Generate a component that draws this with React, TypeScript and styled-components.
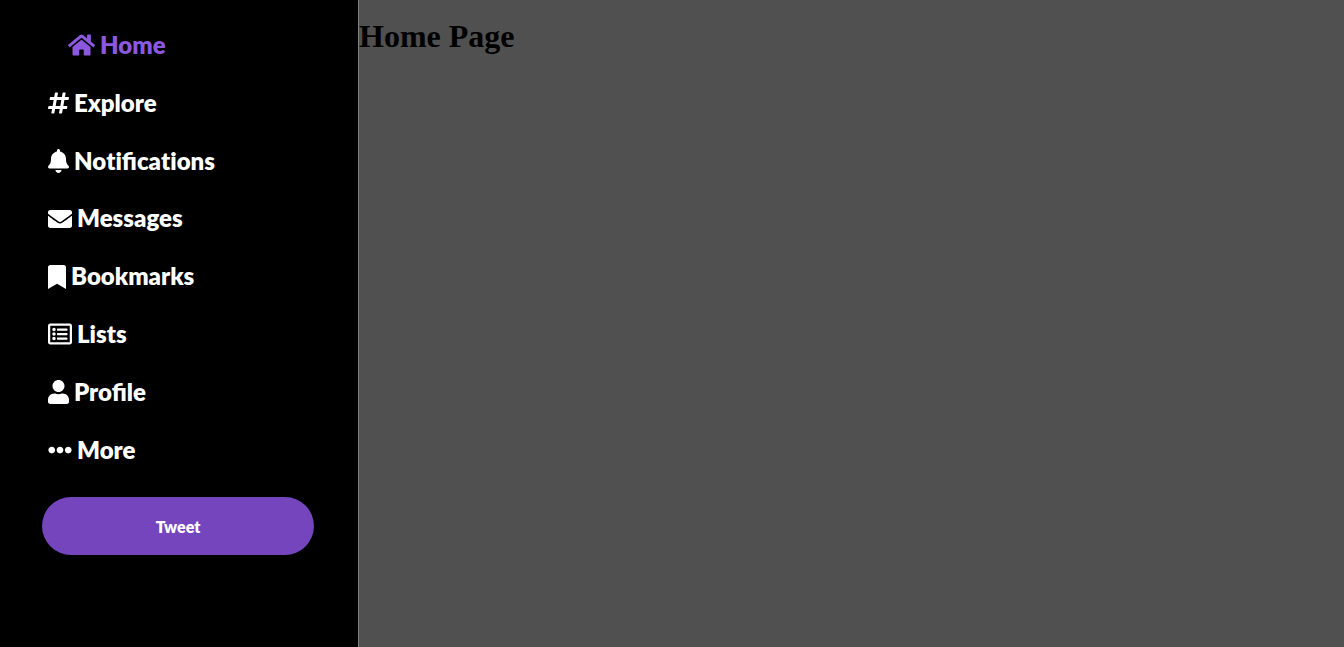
import React from 'react';
import styled, { createGlobalStyle } from 'styled-components';
import { FaHome, FaHashtag, FaBell, FaEnvelope, FaBookmark, FaRegListAlt, FaUser, FaEllipsisH } from 'react-icons/fa';

const GlobalStyle = createGlobalStyle`
  body {
    margin: 0;
    background: #505050;
    font-family: "Liberation Serif", serif;
  }
`;

const Page = styled.div`
  display: flex;
  min-height: 100vh;
`;

const Sidebar = styled.nav`
  box-sizing: border-box;
  flex: 0 0 359px;
  padding: 31px 44px 30px 42px;
  background: #000;
  border-right: 1px solid #808080;
  font-family: Lato, sans-serif;
`;

const List = styled.ul`
  display: flex;
  flex-direction: column;
  gap: 29px;
  margin: 0 0 33px;
  padding: 0 0 0 6px;
  list-style: none;
`;

const NavLink = styled.a<{ $active?: boolean }>`
  display: flex;
  align-items: center;
  gap: 5px;
  padding-left: ${({ $active }) => ($active ? '20px' : '0')};
  color: ${({ $active }) => ($active ? '#8b58df' : '#fff')};
  font-size: 24px;
  font-weight: 800;
  line-height: 1.2;
  text-decoration: none;
`;

const TweetButton = styled.button`
  width: 100%;
  height: 58px;
  border: 0;
  border-radius: 29px;
  background: #7545be;
  color: #fff;
  font: 800 16px Lato, sans-serif;
  cursor: pointer;
`;

const Content = styled.main`
  flex: 1;
`;

const Title = styled.h1`
  margin: 18px 0;
  color: #000;
  font-size: 32px;
  line-height: 37px;
`;

const Plain = styled.span`
  font-variant-ligatures: none;
`;

const items = [
  { label: 'Home', Icon: FaHome, width: 27, active: true },
  { label: 'Explore', Icon: FaHashtag, width: 21 },
  { label: 'Notifications', Icon: FaBell, width: 21 },
  { label: 'Messages', Icon: FaEnvelope, width: 24 },
  { label: 'Bookmarks', Icon: FaBookmark, width: 18 },
  { label: 'Lists', Icon: FaRegListAlt, width: 24 },
  { label: 'Profile', Icon: FaUser, width: 21 },
  { label: 'More', Icon: FaEllipsisH, width: 24 },
];

const Icon = styled.span<{ $width: number }>`
  display: flex;

  svg {
    width: ${({ $width }) => $width}px;
    height: 24px;
  }
`;

// Keeps "t" and "i" as separate letters while "fi" stays joined.
const Label = ({ text }: { text: string }) => (
  <span>
    {text.split(/(t)(?=i)/).map((part, i) => (part === 't' ? <Plain key={i}>t</Plain> : part))}
  </span>
);

export default function App() {
  return (
    <Page>
      <GlobalStyle />
      <Sidebar>
        <List>
          {items.map(({ label, Icon: Glyph, width, active }) => (
            <li key={label}>
              <NavLink href="#" $active={active}>
                <Icon $width={width}><Glyph aria-hidden /></Icon>
                <Label text={label} />
              </NavLink>
            </li>
          ))}
        </List>
        <TweetButton type="button">Tweet</TweetButton>
      </Sidebar>
      <Content>
        <Title>Home Page</Title>
      </Content>
    </Page>
  );
}
